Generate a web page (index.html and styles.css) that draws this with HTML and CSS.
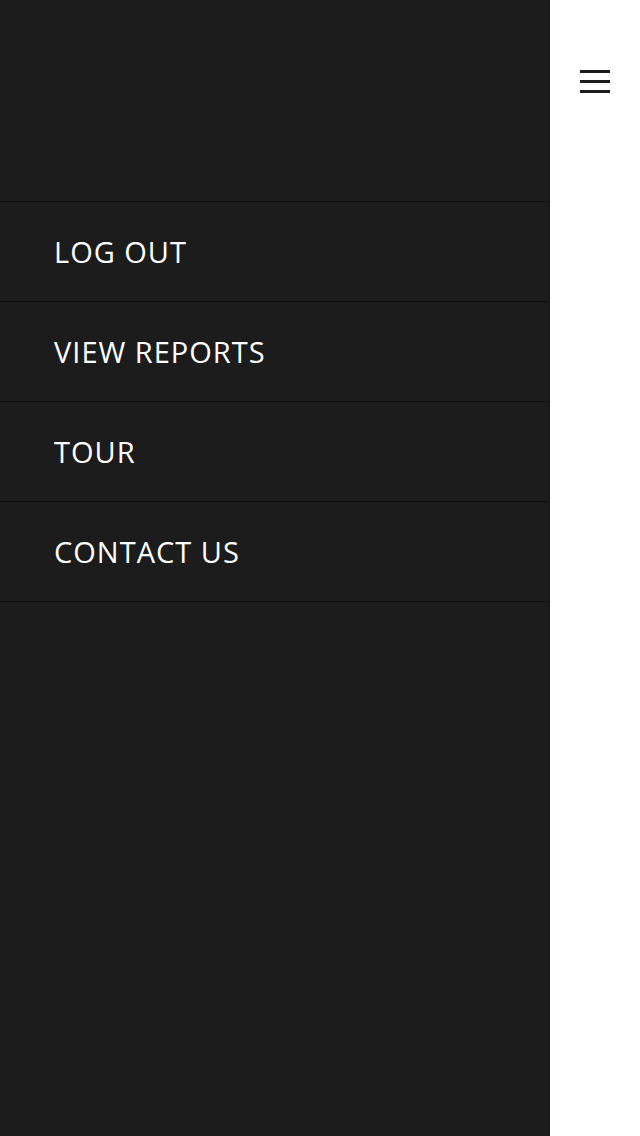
FILE: index.html
```html
<!DOCTYPE html>
<html>
<head>
<meta charset="utf-8">
<link rel="stylesheet" href="styles.css">
</head>
<body>
<div class="page">
  <nav class="drawer">
    <div class="drawer-top"></div>
    <ul class="menu">
      <li class="menu-item">LOG OUT</li>
      <li class="menu-item">VIEW REPORTS</li>
      <li class="menu-item">TOUR</li>
      <li class="menu-item">CONTACT US</li>
    </ul>
  </nav>
  <div class="side">
    <button class="burger" aria-label="Menu">
      <span class="bar"></span>
      <span class="bar"></span>
      <span class="bar"></span>
    </button>
  </div>
</div>
</body>
</html>
```
FILE: styles.css
```css
html, body {
  margin: 0;
  padding: 0;
  height: 100%;
}
body {
  background: #ffffff;
  font-family: "Open Sans", "Liberation Sans", sans-serif;
}
.page {
  display: flex;
  height: 1136px;
}
.drawer {
  width: 550px;
  background: #1c1c1c;
  display: flex;
  flex-direction: column;
}
.drawer-top {
  height: 201px;
}
.menu {
  list-style: none;
  margin: 0;
  padding: 0;
  border-bottom: 1px solid #0f0f0f;
}
.menu-item {
  height: 99px;
  border-top: 1px solid #0f0f0f;
  display: flex;
  align-items: center;
  padding-left: 54px;
  color: #ffffff;
  font-size: 29px;
  font-weight: 400;
  letter-spacing: 1px;
}
.side {
  flex: 1;
  display: flex;
  justify-content: flex-end;
  align-items: flex-start;
}
.burger {
  margin: 70px 30px 0 0;
  padding: 0;
  border: 0;
  background: none;
  display: flex;
  flex-direction: column;
  gap: 7px;
  width: 30px;
}
.bar {
  display: block;
  width: 30px;
  height: 3px;
  background: #1c1c1c;
}
```
